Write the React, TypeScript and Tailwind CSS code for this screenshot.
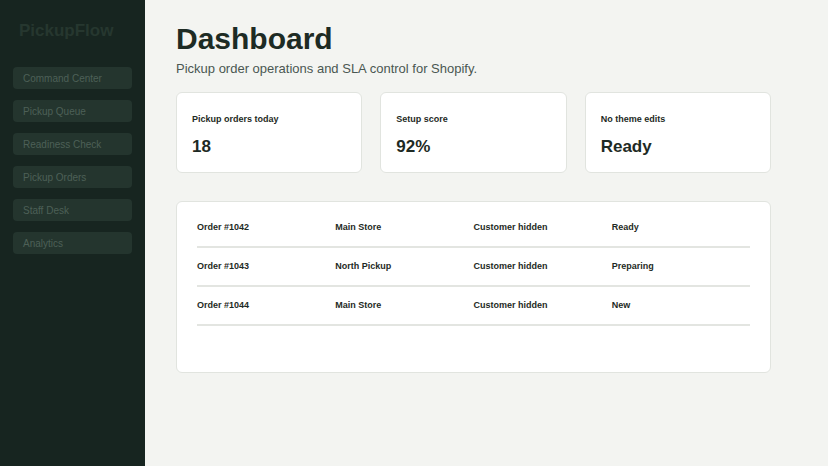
export default function App() {
  const nav = ["Command Center", "Pickup Queue", "Readiness Check", "Pickup Orders", "Staff Desk", "Analytics"];
  const cards = [["Pickup orders today", "18"], ["Setup score", "92%"], ["No theme edits", "Ready"]];
  const rows = [["Order #1042", "Main Store", "Customer hidden", "Ready"], ["Order #1043", "North Pickup", "Customer hidden", "Preparing"], ["Order #1044", "Main Store", "Customer hidden", "New"]];
  return (
    <div className="flex h-[466px] w-[828px] bg-[#f3f4f1] text-[#1e2a24]" style={{ fontFamily: "'Liberation Sans', Arial, sans-serif" }}>
      <aside className="w-[145px] shrink-0 bg-[#172520] px-[13px] pt-[21px]">
        <div className="pl-[6px] text-[17px] font-bold leading-[20px] text-[#26372f]">PickupFlow</div>
        <div className="mt-[26px] flex flex-col gap-[11px]">
          {nav.map((n) => (
            <div key={n} className="flex h-[22px] items-center rounded-[4px] bg-[#24352e] px-[10px] text-[10px] text-[#4d6057]">{n}</div>
          ))}
        </div>
      </aside>
      <main className="flex-1 pl-[31px] pr-[57px] pt-[22px]">
        <h1 className="text-[30px] font-bold leading-[34px] text-[#1d2b24]">Dashboard</h1>
        <p className="mt-[5px] text-[13px] leading-[16px] text-[#4a5751]">Pickup order operations and SLA control for Shopify.</p>
        <div className="mt-[15px] grid grid-cols-3 gap-[18px]">
          {cards.map(([l, v]) => (
            <div key={l} className="h-[81px] rounded-[6px] border border-[#e1e4df] bg-white px-[15px] pt-[20px]">
              <div className="text-[9px] font-bold leading-[12px]">{l}</div>
              <div className="mt-[12px] text-[17px] font-bold leading-[20px]">{v}</div>
            </div>
          ))}
        </div>
        <div className="mt-[28px] h-[172px] rounded-[6px] border border-[#e1e4df] bg-white px-[20px] pt-[7px]">
          {rows.map((r) => (
            <div key={r[0]} className="grid h-[39px] grid-cols-4 items-center border-b-2 border-[#e3e5e1] text-[9px] font-bold">
              {r.map((c) => <div key={c}>{c}</div>)}
            </div>
          ))}
        </div>
      </main>
    </div>
  );
}
